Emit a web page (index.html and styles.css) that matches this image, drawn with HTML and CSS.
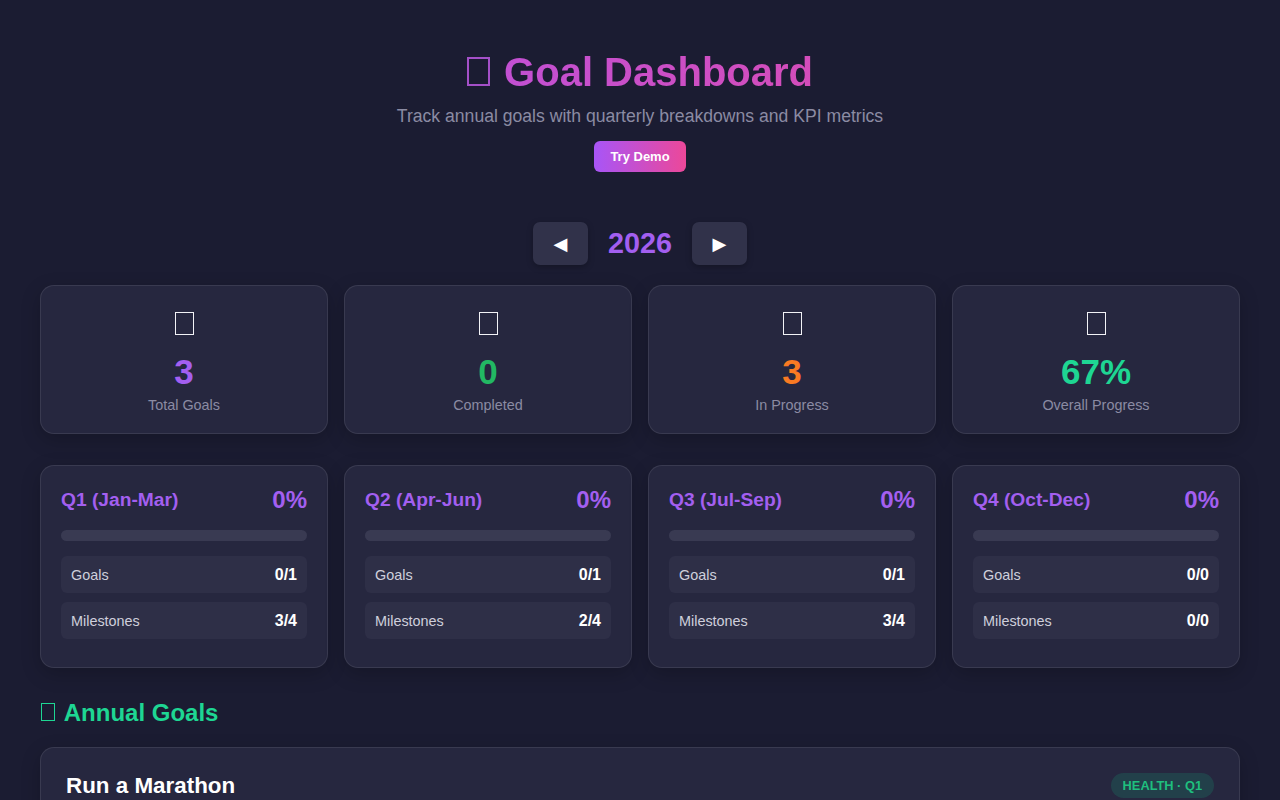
FILE: index.html
```html
<!DOCTYPE html>
<html lang="en">
<head>
<meta charset="utf-8">
<title>Goal Dashboard</title>
<link rel="stylesheet" href="styles.css">
</head>
<body>
<div class="page">
  <header class="hero">
    <h1 class="title"><span class="tofu tofu-title" role="img" aria-label="🎯"></span> Goal Dashboard</h1>
    <p class="subtitle">Track annual goals with quarterly breakdowns and KPI metrics</p>
    <button class="demo-btn">Try Demo</button>
  </header>

  <div class="year-nav">
    <button class="nav-btn">◀</button>
    <span class="year">2026</span>
    <button class="nav-btn">▶</button>
  </div>

  <section class="stats">
    <div class="card stat">
      <div class="stat-icon"><span class="tofu tofu-stat" role="img" aria-label="🎯"></span></div>
      <div class="stat-value purple">3</div>
      <div class="stat-label">Total Goals</div>
    </div>
    <div class="card stat">
      <div class="stat-icon"><span class="tofu tofu-stat" role="img" aria-label="✅"></span></div>
      <div class="stat-value green">0</div>
      <div class="stat-label">Completed</div>
    </div>
    <div class="card stat">
      <div class="stat-icon"><span class="tofu tofu-stat" role="img" aria-label="🚀"></span></div>
      <div class="stat-value orange">3</div>
      <div class="stat-label">In Progress</div>
    </div>
    <div class="card stat">
      <div class="stat-icon"><span class="tofu tofu-stat" role="img" aria-label="📈"></span></div>
      <div class="stat-value teal">67%</div>
      <div class="stat-label">Overall Progress</div>
    </div>
  </section>

  <section class="quarters">
    <div class="card quarter">
      <div class="q-head"><span class="q-name">Q1 (Jan-Mar)</span><span class="q-pct">0%</span></div>
      <div class="q-bar"><div class="q-fill" style="width:0%"></div></div>
      <div class="q-row"><span>Goals</span><strong>0/1</strong></div>
      <div class="q-row"><span>Milestones</span><strong>3/4</strong></div>
    </div>
    <div class="card quarter">
      <div class="q-head"><span class="q-name">Q2 (Apr-Jun)</span><span class="q-pct">0%</span></div>
      <div class="q-bar"><div class="q-fill" style="width:0%"></div></div>
      <div class="q-row"><span>Goals</span><strong>0/1</strong></div>
      <div class="q-row"><span>Milestones</span><strong>2/4</strong></div>
    </div>
    <div class="card quarter">
      <div class="q-head"><span class="q-name">Q3 (Jul-Sep)</span><span class="q-pct">0%</span></div>
      <div class="q-bar"><div class="q-fill" style="width:0%"></div></div>
      <div class="q-row"><span>Goals</span><strong>0/1</strong></div>
      <div class="q-row"><span>Milestones</span><strong>3/4</strong></div>
    </div>
    <div class="card quarter">
      <div class="q-head"><span class="q-name">Q4 (Oct-Dec)</span><span class="q-pct">0%</span></div>
      <div class="q-bar"><div class="q-fill" style="width:0%"></div></div>
      <div class="q-row"><span>Goals</span><strong>0/0</strong></div>
      <div class="q-row"><span>Milestones</span><strong>0/0</strong></div>
    </div>
  </section>

  <h2 class="section-title"><span class="tofu tofu-section" role="img" aria-label="🎯"></span> Annual Goals</h2>

  <div class="card goal">
    <div class="goal-head">
      <h3 class="goal-title">Run a Marathon</h3>
      <span class="badge">HEALTH · Q1</span>
    </div>
  </div>
</div>
</body>
</html>
```

FILE: styles.css
```css
* { box-sizing: border-box; }

html, body {
  margin: 0;
  padding: 0;
}

body {
  background: #1b1c32;
  color: #ffffff;
  font-family: "Liberation Sans", Arial, sans-serif;
  min-height: 100vh;
}

.page {
  max-width: 1280px;
  padding: 48px 40px 40px;
}

.hero {
  text-align: center;
}

/* missing-glyph boxes, as the reference shows them */
.tofu {
  display: inline-block;
  border-style: solid;
  background: transparent;
}

.tofu-title {
  width: 23px;
  height: 29px;
  margin-right: 3px;
  border-width: 2px;
  border-color: #a450c8;
}

.tofu-stat {
  width: 19px;
  height: 23px;
  border-width: 1.5px;
  border-color: #f2f2f6;
}

.tofu-section {
  width: 14px;
  height: 18px;
  margin-left: 1px;
  margin-right: 3px;
  border-width: 1.5px;
  border-color: #1ed693;
}

.title {
  margin: 0;
  font-size: 40px;
  line-height: 48px;
  font-weight: 700;
  background: linear-gradient(90deg, #a855f7, #ec4899);
  -webkit-background-clip: text;
  background-clip: text;
  color: transparent;
}

.subtitle {
  margin: 10px 0 0;
  font-size: 17.6px;
  line-height: 21px;
  color: #8b8ba3;
}

.demo-btn {
  margin-top: 14px;
  border: none;
  border-radius: 6px;
  padding: 8px 16px;
  font-family: "Liberation Sans", Arial, sans-serif;
  font-size: 13px;
  line-height: 15px;
  font-weight: 700;
  color: #ffffff;
  background: linear-gradient(90deg, #a855f7, #ec4899);
}

.year-nav {
  margin-top: 50px;
  display: flex;
  justify-content: center;
  align-items: center;
  gap: 20px;
}

.nav-btn {
  width: 55px;
  height: 43px;
  border: none;
  border-radius: 7px;
  background: #31324a;
  color: #ffffff;
  font-family: "DejaVu Sans", sans-serif;
  font-size: 18px;
  padding: 0;
  box-shadow: 0 2px 6px rgba(0, 0, 0, 0.25);
}

.year {
  font-size: 28.8px;
  font-weight: 700;
  color: #a35ff0;
}

.card {
  background: #26273f;
  border: 1px solid rgba(255, 255, 255, 0.09);
  border-radius: 14px;
  box-shadow: 0 6px 20px rgba(0, 0, 0, 0.2);
}

.stats {
  margin-top: 20px;
  display: grid;
  grid-template-columns: repeat(4, 1fr);
  gap: 16px;
}

.stat {
  text-align: center;
  padding: 21px 20px 19px;
}

.stat-icon {
  height: 32px;
  display: flex;
  justify-content: center;
  align-items: center;
}

.stat-value {
  margin-top: 12px;
  font-size: 35px;
  line-height: 42px;
  font-weight: 700;
}

.stat-label {
  margin-top: 4px;
  font-size: 14.4px;
  line-height: 17px;
  color: #8b8ba3;
}

.purple { color: #a35ff0; }
.green { color: #22b863; }
.orange { color: #f97a23; }
.teal { color: #1ed693; }

.quarters {
  margin-top: 31px;
  display: grid;
  grid-template-columns: repeat(4, 1fr);
  gap: 16px;
}

.quarter {
  padding: 19px 20px 28px;
}

.q-head {
  display: flex;
  justify-content: space-between;
  align-items: center;
  height: 29px;
}

.q-name {
  font-size: 19.2px;
  font-weight: 700;
  color: #a35ff0;
}

.q-pct {
  font-size: 24px;
  font-weight: 700;
  color: #a35ff0;
}

.q-bar {
  margin-top: 16px;
  height: 11px;
  border-radius: 6px;
  background: #393a52;
  overflow: hidden;
}

.q-fill {
  height: 100%;
  background: linear-gradient(90deg, #a855f7, #ec4899);
}

.q-row {
  display: flex;
  justify-content: space-between;
  align-items: center;
  height: 37px;
  padding: 0 10px;
  border-radius: 6px;
  background: #2e2f47;
  font-size: 14.4px;
  color: #cfcfdc;
}

.q-bar + .q-row { margin-top: 15px; }
.q-row + .q-row { margin-top: 9px; }

.q-row strong {
  color: #ffffff;
  font-size: 16px;
  font-weight: 700;
}

.section-title {
  margin: 30px 0 0;
  font-size: 24px;
  line-height: 29px;
  font-weight: 700;
  color: #1ed693;
}

.goal {
  margin-top: 20px;
  padding: 24px 25px;
}

.goal-head {
  display: flex;
  justify-content: space-between;
  align-items: center;
}

.goal-title {
  margin: 0;
  font-size: 22.4px;
  line-height: 27px;
  font-weight: 700;
  color: #ffffff;
}

.badge {
  padding: 6px 12px;
  border-radius: 999px;
  background: rgba(16, 185, 129, 0.18);
  color: #1fbf7e;
  font-size: 12.8px;
  line-height: 13px;
  font-weight: 700;
}
```
